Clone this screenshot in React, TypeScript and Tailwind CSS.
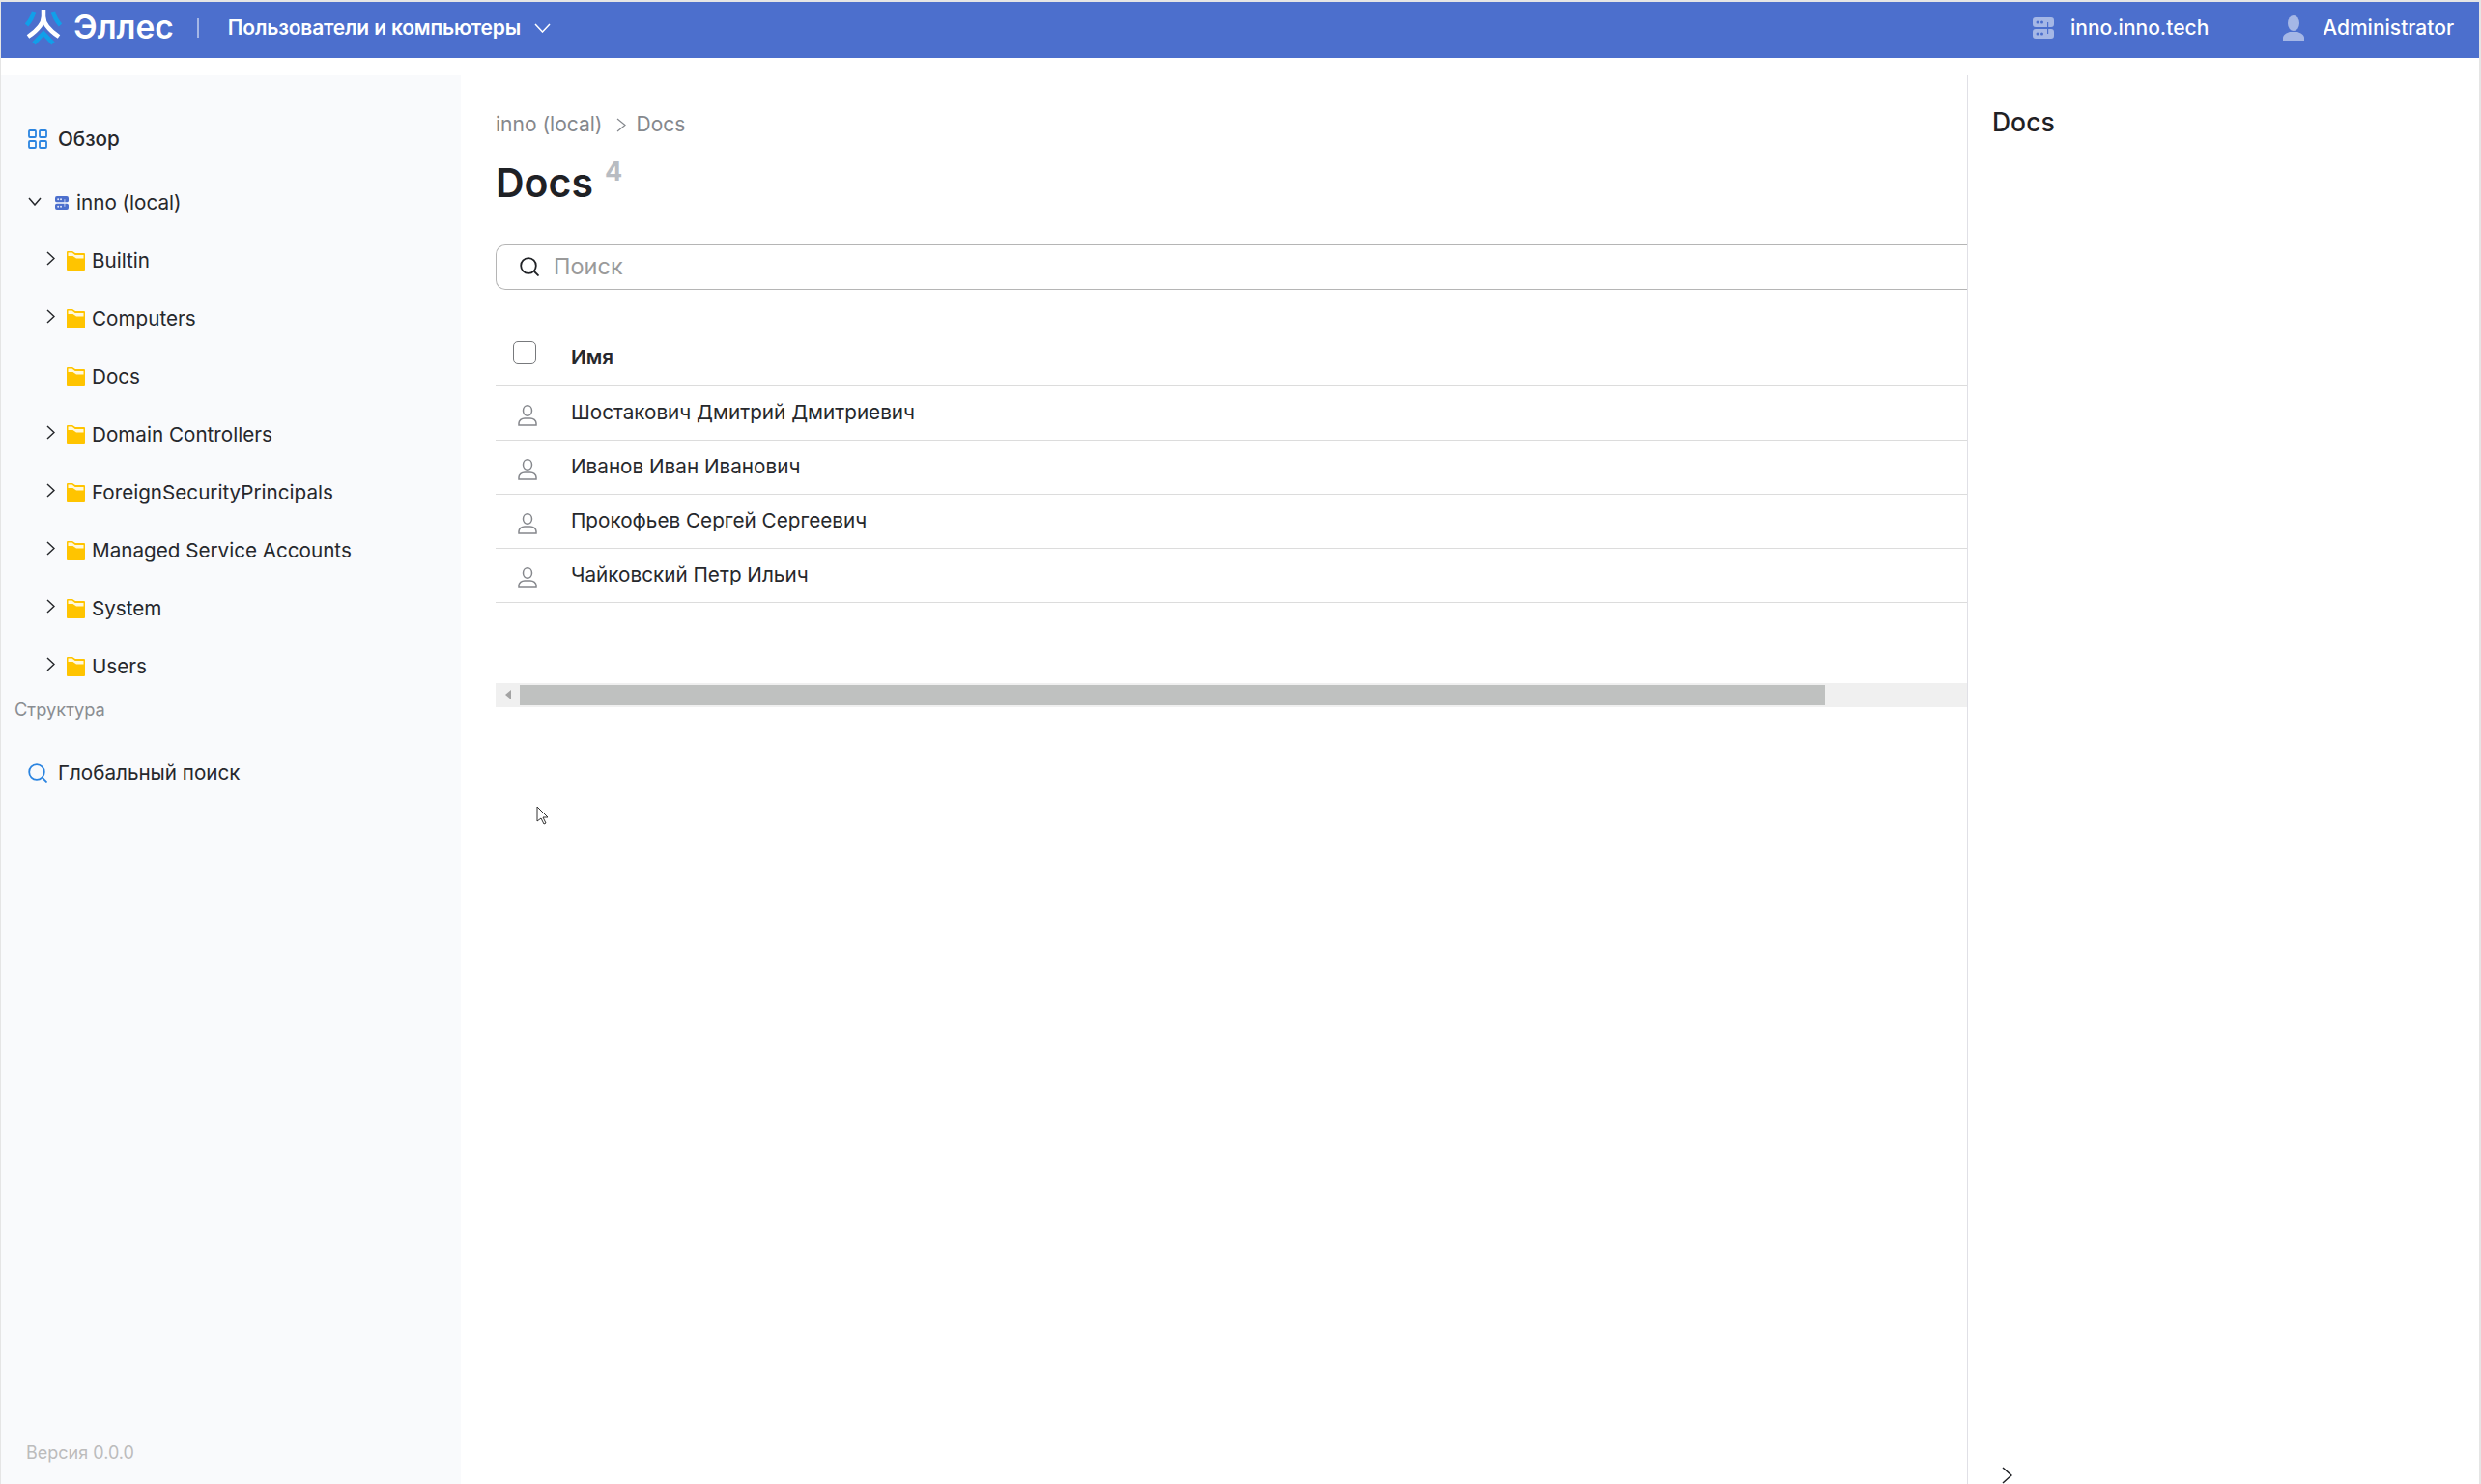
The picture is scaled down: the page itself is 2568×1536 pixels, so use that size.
import React from 'react';

const font = 'font-["Inter","Noto_Sans",sans-serif]';

const folders = [
  { name: 'Builtin', arrow: true },
  { name: 'Computers', arrow: true },
  { name: 'Docs', arrow: false },
  { name: 'Domain Controllers', arrow: true },
  { name: 'ForeignSecurityPrincipals', arrow: true },
  { name: 'Managed Service Accounts', arrow: true },
  { name: 'System', arrow: true },
  { name: 'Users', arrow: true },
];

const people = [
  'Шостакович Дмитрий Дмитриевич',
  'Иванов Иван Иванович',
  'Прокофьев Сергей Сергеевич',
  'Чайковский Петр Ильич',
];

function Logo() {
  return (
    <svg width="38" height="37" viewBox="6 5 38 37" fill="none" strokeWidth="4.5" className="shrink-0">
      <path d="M15 7C14 12 11 17 7.500 21M35 7C36 12 39 17 42.500 21" stroke="#119fe9" />
      <path d="M15 40L25 29.500 35 40" stroke="#119fe9" />
      <path d="M25 5V12C25 20 18 27 9 33M25 5V12C25 20 32 27 41 33" stroke="#fff" />
    </svg>
  );
}

function ServerIcon({ className, inner }: { className: string; inner: string }) {
  return (
    <svg viewBox="0 0 22 22" className={className} fill="currentColor">
      <path d="M3 0h16a3 3 0 0 1 3 3v4a3 3 0 0 1-3 3H3a3 3 0 0 1-3-3V3a3 3 0 0 1 3-3zM3 12h16a3 3 0 0 1 3 3v4a3 3 0 0 1-3 3H3a3 3 0 0 1-3-3v-4a3 3 0 0 1 3-3z" />
      <circle cx="5" cy="5" r="1.500" fill={inner} />
      <circle cx="9.500" cy="5" r="1.500" fill={inner} />
      <circle cx="5" cy="17" r="1.500" fill={inner} />
      <circle cx="9.500" cy="17" r="1.500" fill={inner} />
      <rect x="15" y="5" width="1.200" height="12" fill={inner} />
    </svg>
  );
}

function FolderIcon() {
  return (
    <svg width="19" height="20" viewBox="0 0 19 20" className="shrink-0">
      <path d="M0 1a1 1 0 0 1 1-1h5l3 2h9a1 1 0 0 1 1 1v16a1 1 0 0 1-1 1H1a1 1 0 0 1-1-1z" fill="#ffc400" />
      <path d="M1.500 1.500h4l3.200 2.500h8.800v3.500H10L6.500 5H1.500z" fill="#fff8dc" />
    </svg>
  );
}

function PersonIcon() {
  return (
    <svg width="20" height="22" viewBox="0 0 20 22" fill="none" stroke="#85878c" strokeWidth="1.500" className="shrink-0">
      <ellipse cx="10" cy="6" rx="4.500" ry="5.200" />
      <path d="M1 21v-2c0-3 3-5 6-5h6c3 0 6 2 6 5v2z" />
    </svg>
  );
}

function ArrowRight({ w, h, className }: { w: number; h: number; className?: string }) {
  return (
    <svg width={w} height={h} viewBox={`0 0 ${w} ${h}`} fill="none" stroke="currentColor" strokeWidth="1.500" className={className}>
      <path d={`M1 1L${w - 1} ${h / 2} 1 ${h - 1}`} />
    </svg>
  );
}

function ArrowDown({ w, h, className }: { w: number; h: number; className?: string }) {
  return (
    <svg width={w} height={h} viewBox={`0 0 ${w} ${h}`} fill="none" stroke="currentColor" strokeWidth="1.500" className={className}>
      <path d={`M1 1L${w / 2} ${h - 1} ${w - 1} 1`} />
    </svg>
  );
}

function SearchIcon({ className }: { className: string }) {
  return (
    <svg viewBox="0 0 20 20" fill="none" stroke="currentColor" strokeWidth="1.800" className={className}>
      <circle cx="9" cy="9" r="7.800" />
      <path d="M15 15l4.500 4.500" />
    </svg>
  );
}

function GridIcon() {
  return (
    <svg width="20" height="20" viewBox="0 0 20 20" fill="none" stroke="#2b84e0" strokeWidth="1.800" className="shrink-0">
      <rect x="1" y="1" width="7" height="7" rx="1" />
      <rect x="12" y="1" width="7" height="7" rx="1" />
      <rect x="1" y="12" width="7" height="7" rx="1" />
      <rect x="12" y="12" width="7" height="7" rx="1" />
    </svg>
  );
}

export default function App() {
  return (
    <div className={`relative flex h-[1536px] w-[2568px] flex-col overflow-hidden border-t-2 border-r-2 border-l border-[#e5e5e5] bg-white ${font}`}>
      {/* Header */}
      <header className="flex h-[58px] shrink-0 items-center bg-[#4c6fcd] pb-[5px] text-white">
        <div className="ml-[25px] flex items-center">
          <Logo />
          <span className="ml-[12px] text-[33.500px] leading-none font-semibold">Эллес</span>
        </div>
        <div className="ml-[24px] h-[20px] w-[2px] bg-[#a5b7e6]" />
        <span className="ml-[30px] text-[21px] font-semibold tracking-[-0.180px]">Пользователи и компьютеры</span>
        <ArrowDown w={17} h={10} className="ml-[14px]" />
        <div className="ml-auto flex items-center">
          <ServerIcon className="size-[22px] text-[#a5b7e6]" inner="#4c6fcd" />
          <span className="ml-[17px] text-[21px] font-medium">inno.inno.tech</span>
          <svg width="22" height="26" viewBox="0 0 22 26" fill="#a5b7e6" className="ml-[77px]">
            <ellipse cx="11" cy="8" rx="6" ry="8" />
            <path d="M0 26v-3c0-3 4-5 7-6h8c3 1 7 3 7 6v3z" />
          </svg>
          <span className="mr-[26px] ml-[19px] text-[21px] font-medium">Administrator</span>
        </div>
      </header>

      <div className="mt-[18px] flex min-h-0 flex-1">
        {/* Sidebar */}
        <aside className="flex w-[476px] shrink-0 flex-col bg-[#f9fafc] pb-[20px] text-[20.650px] text-[#26282c]">
          <div className="mt-[50px] flex h-[32px] items-center pl-[28px]">
            <GridIcon />
            <span className="ml-[11px] font-medium">Обзор</span>
          </div>
          <div className="mt-[34px] flex h-[32px] items-center pl-[28px]">
            <ArrowDown w={14} h={9} className="-translate-y-[2px]" />
            <ServerIcon className="ml-[14px] size-[14px] text-[#4c6fcd]" inner="#e4eafa" />
            <span className="ml-[8px]">inno (local)</span>
          </div>
          <ul className="mt-[14px]">
            {folders.map((f) => (
              <li key={f.name} className="flex h-[60px] items-center pl-[47px]">
                <span className="flex w-[21px] shrink-0 items-center">
                  {f.arrow && <ArrowRight w={9} h={15} className="-translate-y-[3px]" />}
                </span>
                <FolderIcon />
                <span className="ml-[7px] whitespace-nowrap">{f.name}</span>
              </li>
            ))}
          </ul>
          <div className="mt-[2px] pl-[14px] text-[18.300px] leading-[24px] text-[#8a8d92]">Структура</div>
          <div className="mt-[38px] flex h-[32px] items-center pl-[28px]">
            <SearchIcon className="size-[20px] text-[#2b84e0]" />
            <span className="ml-[11px]">Глобальный поиск</span>
          </div>
          <div className="mt-auto pl-[26px] text-[18px] leading-[24px] text-[#bcbcbc]">Версия 0.0.0</div>
        </aside>

        {/* Main */}
        <main className="min-w-0 flex-1 pt-[37px] pl-[36px]">
          <div className="flex h-[28px] items-center text-[21px] text-[#85888d]">
            <span>inno (local)</span>
            <ArrowRight w={10} h={15} className="mr-[10px] ml-[15px] [&>path]:stroke-[1.2]" />
            <span>Docs</span>
          </div>
          <div className="mt-[20px] flex items-start text-[#1f2125]">
            <h1 className="text-[41px] leading-[52px] font-semibold">Docs</h1>
            <span className="ml-[12px] text-[27px] leading-[30px] font-bold text-[#b8bcc2]">4</span>
          </div>
          <div className="mt-[38px] flex h-[47px] items-center rounded-l-[10px] border border-r-0 border-[#b5b5b5] pb-[1px] pl-[24px]">
            <SearchIcon className="size-[20px] text-[#1f2125]" />
            <span className="ml-[15px] text-[23.500px] text-[#9a9a9a]">Поиск</span>
          </div>
          <table className="mt-[31px] w-full border-collapse text-[20.700px] text-[#26282c]">
            <thead>
              <tr className="h-[68px] border-b border-[#dcdcdc]">
                <th className="w-[78px] pl-[18px] text-left">
                  <div className="size-[24px] rounded-[5px] border border-[#77797c]" />
                </th>
                <th className="pt-[10px] text-left font-semibold">Имя</th>
              </tr>
            </thead>
            <tbody>
              {people.map((p) => (
                <tr key={p} className="h-[56px] border-b border-[#dcdcdc]">
                  <td className="pl-[23px]">
                    <div className="translate-y-[3px]">
                      <PersonIcon />
                    </div>
                  </td>
                  <td>{p}</td>
                </tr>
              ))}
            </tbody>
          </table>
          {/* Scrollbar */}
          <div className="mt-[83px] flex h-[25px] items-center bg-[#f0f0f0]">
            <div className="flex w-[25px] shrink-0 justify-center">
              <div className="h-0 w-0 border-y-[5px] border-r-[6px] border-y-transparent border-r-[#a3a3a3]" />
            </div>
            <div className="h-[21px] w-[1351px] bg-[#bfc1c0]" />
          </div>
        </main>

        {/* Right panel */}
        <aside className="flex w-[530px] shrink-0 flex-col border-l border-[#e0e0e6] pl-[25px]">
          <h2 className="mt-[30px] text-[26.500px] leading-[36px] font-medium text-[#1f2125]">Docs</h2>
          <ArrowRight w={11} h={18} className="mt-auto ml-[10px] text-[#1f2125]" />
        </aside>
      </div>

      {/* Mouse pointer captured in the screenshot */}
      <svg width="13" height="20" viewBox="0 0 13 20" fill="#fff" stroke="#333" strokeWidth="1" className="absolute top-[832px] left-[554px]">
        <path d="M1 1v15l4-3 3 6 2-1-3-6h5z" />
      </svg>
    </div>
  );
}
